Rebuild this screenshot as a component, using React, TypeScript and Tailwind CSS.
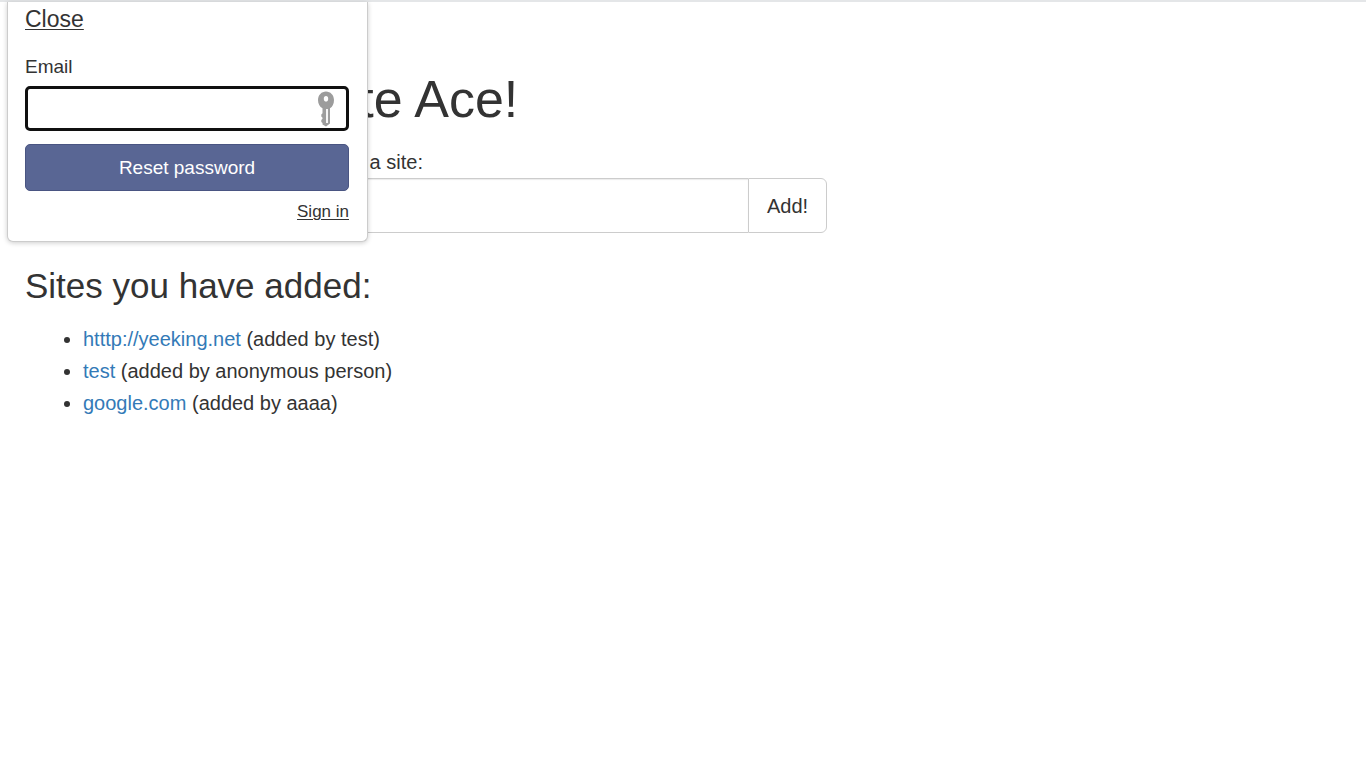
type Site = { url: string; addedBy: string };

const sites: Site[] = [
  { url: "htttp://yeeking.net", addedBy: "test" },
  { url: "test", addedBy: "anonymous person" },
  { url: "google.com", addedBy: "aaaa" },
];

function KeyIcon() {
  return (
    <svg
      className="pointer-events-none h-9 w-[18px] shrink-0"
      viewBox="0 0 18 36"
      preserveAspectRatio="none"
      aria-hidden="true"
    >
      <path
        fill="#9c9c9c"
        fillRule="evenodd"
        d="M9 .5C4.600.5 1 4 1 9c0 4 1.800 6.800 4.500 8.200v5L4.300 23.500v2l1.200 1.200v1L4.300 29v2l1.200 1v1.500L9 35.500l4-3V17.200C15.500 15.800 17 13 17 9 17 4 13.400.5 9 .5zM9 5a2.200 2.800 0 1 1 0 5.600A2.200 2.800 0 1 1 9 5z"
      />
      <path d="M10 18v14" stroke="#f4f4f4" strokeWidth="2" />
    </svg>
  );
}

function ResetPanel() {
  return (
    <form
      className="absolute top-0 left-[7px] w-[361px] rounded-b-md border border-t-0 border-[#cccccc] bg-white pt-px pr-[18px] pb-4 pl-[17px] shadow-[0_1px_5px_rgba(0,0,0,0.2)]"
      onSubmit={(e) => e.preventDefault()}
    >
      <a href="#close" className="block w-fit text-[23px] leading-8 underline decoration-1 underline-offset-2">
        Close
      </a>
      <label htmlFor="email" className="mt-4 block text-[19px] leading-8">
        Email
      </label>
      <div className="mt-[3px] flex h-[45px] items-center rounded-[5px] border-[3px] border-[#101010] bg-white pr-[11px]">
        <input id="email" type="email" className="h-full min-w-0 flex-1 bg-transparent px-3 text-[19px] outline-none" />
        <KeyIcon />
      </div>
      <button
        type="submit"
        className="mt-[13px] h-[47px] w-full rounded-[5px] border border-[#4a5582] bg-[#596694] text-[19px] text-white"
      >
        Reset password
      </button>
      <a href="#sign-in" className="mt-2 ml-auto block w-fit text-[17px] leading-[26px] underline decoration-1 underline-offset-2">
        Sign in
      </a>
    </form>
  );
}

export default function App() {
  return (
    <div className="relative min-h-screen border-t-2 border-[#e4e6e8] bg-white font-['Liberation_Sans',Arial,sans-serif] text-[20px] leading-8 text-[#333333]">
      <main className="px-[25px] pt-[66px]">
        <h1 className="text-[52px] leading-[62px]">Welcome to Site Ace!</h1>
        <form className="mt-4 max-w-[802px]" onSubmit={(e) => e.preventDefault()}>
          <label htmlFor="site" className="block">
            Use the form below if you want to post a site:
          </label>
          <div className="flex h-[55px]">
            <input
              id="site"
              type="text"
              className="min-w-0 flex-1 rounded-l-md border border-r-0 border-[#cccccc] px-4 shadow-[inset_0_1px_1px_rgba(0,0,0,0.08)] outline-none"
            />
            <button type="submit" className="w-[79px] rounded-r-md border border-[#cccccc] bg-white">
              Add!
            </button>
          </div>
        </form>
        <h2 className="mt-8 text-[35px] leading-[42px]">Sites you have added:</h2>
        <ul className="mt-4 list-disc pl-[58px]">
          {sites.map((site) => (
            <li key={site.url}>
              <a href="#site" className="text-[#337ab7]">
                {site.url}
              </a>{" "}
              (added by {site.addedBy})
            </li>
          ))}
        </ul>
      </main>
      <ResetPanel />
    </div>
  );
}
